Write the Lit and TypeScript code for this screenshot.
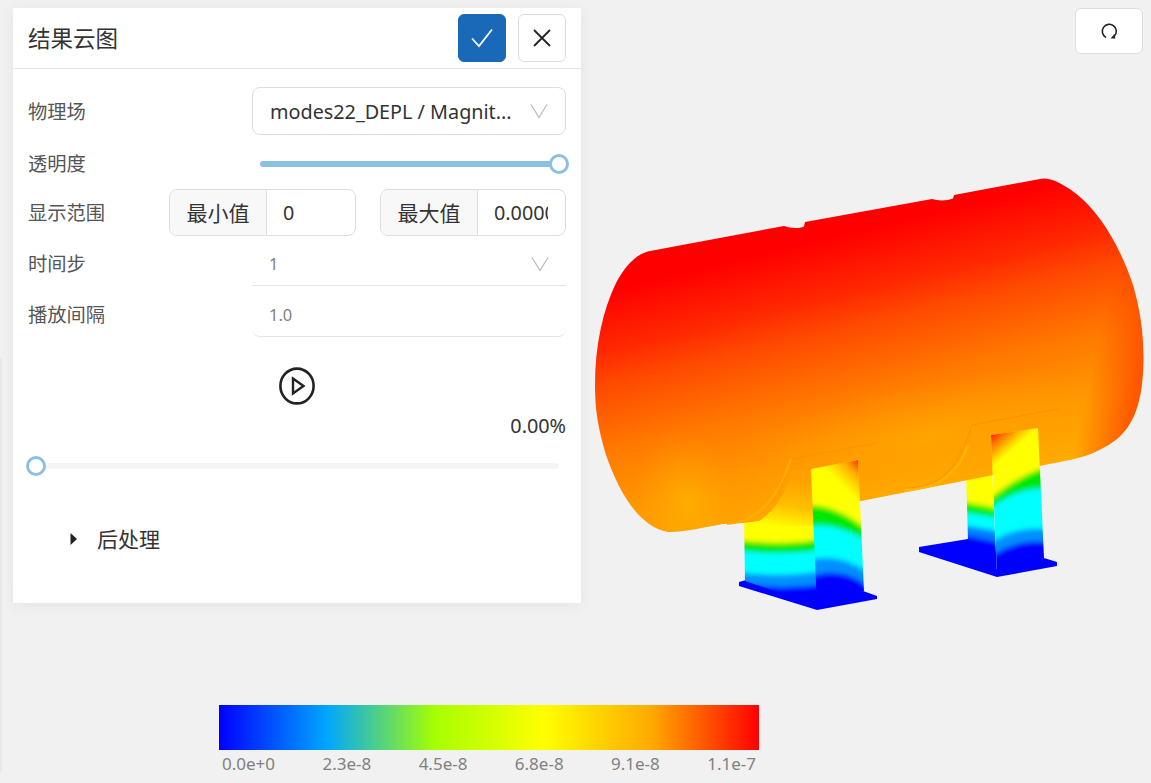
import { LitElement, html, css, svg } from 'lit';
import { customElement } from 'lit/decorators.js';

const chevron = html`<svg class="chev" viewBox="0 0 18 16" width="18" height="16">
  <path d="M1 1.5 L9 14.5 L17 1.5" fill="none" stroke="#bdbdbd" stroke-width="1.3"/>
</svg>`;

// the tank and its two saddles, painted roughly like the solver's contour plot
const tankPath =
  'M650 251 L784 226 C790 228 798 229 804 226.5 L805 222 L932 199 C938 201 947 201 953 198.5 L954 195 L1040 179 ' +
  'C1048 177 1057 181 1068 188 C1094 204 1118 240 1133 285 C1142 315 1146 350 1142 385 C1138 415 1128 435 1105 447 ' +
  'C1090 456 1075 459 1060 462 L815 510 C780 518 750 524 723 524 C705 527 685 532 668 532 C640 527 620 495 606 455 ' +
  'C598 428 595 410 595 385 C595 345 603 310 616 283 C624 268 635 254 650 251 Z';

const faceA1 = 'M744 515 L815 500 L818 606 L745 581 Z';
const faceA2 = 'M811 469 L858 460 L864 591 L817 606 Z';
const faceB1 = 'M966 470 L992 470 L997 576 L968 540 Z';
const faceB2 = 'M991 435 L1038 428 L1044 558 L997 576 Z';

// one colour layer of a saddle face: everything below the curve through three points
const band = (color: string, x0: number, y0: number, x1: number, y1: number, x2: number, y2: number) =>
  svg`<path d="M${x0} ${y0} Q${x1} ${2 * y1 - (y0 + y2) / 2} ${x2} ${y2} L${x2} 640 L${x0} 640 Z" fill=${color}/>`;

const model = svg`
  <defs>
    <linearGradient id="tankFill" gradientUnits="userSpaceOnUse" x1="835" y1="212" x2="905" y2="505">
      <stop offset="0" stop-color="#ff0000"/>
      <stop offset="0.08" stop-color="#ff0000"/>
      <stop offset="0.27" stop-color="#ff2800"/>
      <stop offset="0.376" stop-color="#ff4800"/>
      <stop offset="0.6" stop-color="#ff7a00"/>
      <stop offset="0.8" stop-color="#ff9800"/>
      <stop offset="1" stop-color="#ffae00"/>
    </linearGradient>
    <radialGradient id="endGlow" gradientUnits="userSpaceOnUse" cx="0" cy="0" r="1"
      gradientTransform="translate(688 505) rotate(-10) scale(60 75)">
      <stop offset="0" stop-color="#ffb000" stop-opacity="0.9"/>
      <stop offset="0.6" stop-color="#ffa000" stop-opacity="0.4"/>
      <stop offset="1" stop-color="#ff9000" stop-opacity="0"/>
    </radialGradient>
    <radialGradient id="midGlow" gradientUnits="userSpaceOnUse" cx="0" cy="0" r="1"
      gradientTransform="translate(930 435) rotate(-10) scale(210 55)">
      <stop offset="0" stop-color="#ffaa00" stop-opacity="0.7"/>
      <stop offset="1" stop-color="#ffa000" stop-opacity="0"/>
    </radialGradient>
    <linearGradient id="edgeRed" gradientUnits="userSpaceOnUse" x1="1100" y1="330" x2="1146" y2="340">
      <stop offset="0" stop-color="#ff4000" stop-opacity="0"/>
      <stop offset="1" stop-color="#ff3c00" stop-opacity="0.7"/>
    </linearGradient>
    <linearGradient id="cradle" gradientUnits="userSpaceOnUse" x1="790" y1="478" x2="782" y2="528">
      <stop offset="0" stop-color="#ffa000"/>
      <stop offset="0.55" stop-color="#ffc000"/>
      <stop offset="1" stop-color="#ffff00"/>
    </linearGradient>
    <linearGradient id="legACorner" gradientUnits="userSpaceOnUse" x1="838" y1="482" x2="860" y2="460">
      <stop offset="0" stop-color="#ffa000" stop-opacity="0"/>
      <stop offset="0.55" stop-color="#ff9000" stop-opacity="0.7"/>
      <stop offset="1" stop-color="#ff2000"/>
    </linearGradient>
    <linearGradient id="legBCorner" gradientUnits="userSpaceOnUse" x1="1006" y1="456" x2="990" y2="438">
      <stop offset="0" stop-color="#ff9000" stop-opacity="0"/>
      <stop offset="0.5" stop-color="#ff8000" stop-opacity="0.75"/>
      <stop offset="1" stop-color="#ff3000"/>
    </linearGradient>
    <clipPath id="tankClip"><path d=${tankPath}/></clipPath>
    <clipPath id="clipA1"><path d=${faceA1}/></clipPath>
    <clipPath id="clipA2"><path d=${faceA2}/></clipPath>
    <clipPath id="clipB1"><path d=${faceB1}/></clipPath>
    <clipPath id="clipB2"><path d=${faceB2}/></clipPath>
    <filter id="soft" x="-20%" y="-20%" width="140%" height="140%"><feGaussianBlur stdDeviation="2.6"/></filter>
  </defs>

  <!-- back saddle, the part that shows under the shell -->
  <path d="M919 547 L968 539 L997 570 L1044 558 L1057 562 L1057 566 L997 577 L919 552 Z" fill="#0000ff"/>
  <g clip-path="url(#clipB1)"><g filter="url(#soft)">
    <rect x="950" y="460" width="60" height="130" fill="#ffff00"/>
    ${band('#00ee00', 950, 500, 980, 505, 1010, 511)}
    ${band('#00ffff', 950, 511, 980, 515, 1010, 520)}
    ${band('#0080ff', 950, 524, 980, 528, 1010, 534)}
    ${band('#0000ff', 950, 534, 980, 538, 1010, 546)}
  </g></g>

  <!-- front saddle, left face and foot -->
  <path d="M739 582 L746 580 L817 603 L863 591 L877 596 L877 599 L817 610 L739 586 Z" fill="#0000ff"/>
  <g clip-path="url(#clipA1)"><g filter="url(#soft)">
    <rect x="730" y="490" width="100" height="130" fill="#ffff00"/>
    ${band('#00e800', 730, 539, 780, 543, 830, 538)}
    ${band('#00ffff', 730, 549, 780, 553, 830, 549)}
    ${band('#0090ff', 730, 571, 780, 575, 830, 570)}
    ${band('#0000ff', 730, 582, 780, 587, 830, 583)}
  </g></g>

  <!-- shell -->
  <path d=${tankPath} fill="url(#tankFill)"/>
  <g clip-path="url(#tankClip)">
    <path d=${tankPath} fill="url(#midGlow)"/>
    <path d=${tankPath} fill="url(#endGlow)"/>
    <path d=${tankPath} fill="url(#edgeRed)"/>
    <path d="M791 459 L877 443 M972 425 L1058 409" fill="none" stroke="#ff9000" stroke-width="1.2"/>
    <path d="M905 488 C940 488 958 470 972 425" fill="none" stroke="#ff9400" stroke-width="1.2"/>
    <path d="M905 490 C940 490 960 470 968 445" fill="none" stroke="#ffb800" stroke-width="2.4"/>
  </g>
  <!-- front cradle wraps the shell and shades into the yellow face -->
  <path d="M745 527 C770 520 785 497 792 470 L815 470 L815 526 Z" fill="url(#cradle)"/>
  <path d="M727 524 C755 522 775 505 791 459" fill="none" stroke="#ffb000" stroke-width="1.8"/>

  <!-- saddle faces that stand in front of the shell -->
  <g clip-path="url(#clipA2)"><g filter="url(#soft)">
    <rect x="800" y="450" width="75" height="170" fill="#ffff00"/>
    ${band('#00e800', 800, 506, 832, 510, 870, 532)}
    ${band('#00ffff', 800, 528, 832, 527, 870, 543)}
    ${band('#0090ff', 800, 562, 838, 559, 870, 574)}
    ${band('#0000ff', 800, 580, 840, 573, 870, 588)}
  </g></g>
  <path d=${faceA2} fill="url(#legACorner)"/>
  <g clip-path="url(#clipB2)"><g filter="url(#soft)">
    <rect x="985" y="420" width="70" height="170" fill="#ffff00"/>
    ${band('#00e800', 985, 503, 1017, 480, 1050, 466)}
    ${band('#00ffff', 985, 512, 1017, 493, 1050, 489)}
    ${band('#0090ff', 985, 546, 1017, 531, 1050, 530)}
    ${band('#0000ff', 985, 560, 1017, 544, 1050, 543)}
  </g></g>
  <path d=${faceB2} fill="url(#legBCorner)"/>
`;

@customElement('app-root')
export class AppRoot extends LitElement {
  static styles = css`
    :host {
      display: block;
      position: relative;
      width: 1151px;
      height: 783px;
      overflow: hidden;
      background: #f1f1f1;
      font-family: 'Noto Sans', 'Noto Sans CJK SC', sans-serif;
      color: #333;
    }
    .strip {
      position: absolute;
      left: 0;
      top: 358px;
      width: 2px;
      height: 414px;
      background: #e8e8e8;
    }
    .model {
      position: absolute;
      left: 0;
      top: 0;
    }
    .reset {
      position: absolute;
      left: 1075px;
      top: 8px;
      width: 68px;
      height: 46px;
      box-sizing: border-box;
      display: flex;
      align-items: center;
      justify-content: center;
      background: #fff;
      border: 1px solid #ddd;
      border-radius: 6px;
    }
    .panel {
      position: absolute;
      left: 13px;
      top: 8px;
      width: 568px;
      height: 595px;
      background: #fff;
      box-shadow: 0 2px 14px rgba(0, 0, 0, 0.06);
      display: flex;
      flex-direction: column;
    }
    .head {
      height: 61px;
      box-sizing: border-box;
      flex: none;
      display: flex;
      align-items: center;
      gap: 12px;
      padding: 0 15px;
      border-bottom: 1px solid #e4e4e4;
    }
    .title {
      flex: 1;
      font-size: 22.5px;
      padding-bottom: 2px;
      color: #333;
    }
    .btn {
      width: 48px;
      height: 48px;
      box-sizing: border-box;
      border-radius: 6px;
      display: flex;
      align-items: center;
      justify-content: center;
      background: #fff;
      border: 1px solid #ddd;
    }
    .btn.ok {
      background: #1a69b8;
      border-color: #1a69b8;
    }
    .body {
      padding: 18px 15px 0;
      display: flex;
      flex-direction: column;
    }
    .row {
      display: flex;
      align-items: center;
      font-size: 19.3px;
      color: #555;
    }
    .row .lab {
      width: 224px;
      flex: none;
    }
    .row.opacity {
      height: 24px;
      margin-top: 17px;
    }
    .row.opacity .lab {
      padding-bottom: 3px;
    }
    .row.under {
      margin-top: 2px;
    }
    .row.under .lab {
      padding-top: 2px;
    }
    .row.under + .row.under {
      margin-top: 3px;
    }
    .sel {
      width: 314px;
      height: 48px;
      box-sizing: border-box;
      border: 1px solid #ddd;
      border-radius: 8px;
      padding: 0 17px;
      display: flex;
      align-items: center;
      justify-content: space-between;
      color: #333;
      font-size: 19.8px;
      white-space: nowrap;
    }
    .chev {
      flex: none;
    }
    .slider {
      position: relative;
      margin-left: 8px;
      width: 298px;
      height: 6px;
      background: #8bc0e2;
      border-radius: 3px;
    }
    .knob {
      position: absolute;
      top: -7px;
      width: 20px;
      height: 20px;
      box-sizing: border-box;
      border-radius: 50%;
      background: #fff;
      border: 3px solid #8bc0e2;
    }
    .range {
      display: flex;
      align-items: center;
      margin-top: 13px;
    }
    .range .lab {
      width: 141px;
      flex: none;
      padding-bottom: 1px;
    }
    .group {
      height: 47px;
      box-sizing: border-box;
      border: 1px solid #ddd;
      border-radius: 8px;
      display: flex;
      overflow: hidden;
      color: #333;
    }
    .group .addon {
      width: 97px;
      flex: none;
      display: flex;
      align-items: center;
      justify-content: center;
      background: #f8f8f8;
      border-right: 1px solid #ddd;
      box-sizing: border-box;
      font-size: 21px;
      padding-bottom: 2px;
    }
    .group .val {
      margin-left: 16px;
      width: 54px;
      display: flex;
      align-items: center;
      font-size: 19.8px;
      overflow: hidden;
      white-space: nowrap;
    }
    .group.min {
      width: 187px;
      margin-right: 24px;
    }
    .group.max {
      width: 186px;
    }
    .plain {
      width: 314px;
      height: 48px;
      box-sizing: border-box;
      padding: 4px 17px 0;
      display: flex;
      align-items: center;
      justify-content: space-between;
      color: #808080;
      font-size: 16.5px;
      border-bottom: 1px solid #e4e4e4;
    }
    .plain.round {
      border-radius: 0 0 8px 8px;
    }
    .play {
      display: flex;
      justify-content: center;
      margin-top: 30px;
    }
    .pct {
      text-align: right;
      font-size: 19.8px;
      color: #333;
      margin-top: 8px;
      line-height: 26px;
    }
    .track {
      position: relative;
      margin: 24px 7px 0 8px;
      height: 6px;
      background: #f5f5f5;
      border-radius: 3px;
    }
    .post {
      display: flex;
      align-items: center;
      margin: 55px 0 0 42px;
      font-size: 21px;
      color: #333;
      line-height: 30px;
    }
    .post svg {
      margin-right: 19px;
    }
    .scale {
      position: absolute;
      left: 219px;
      top: 705px;
      width: 540px;
    }
    .bar {
      height: 45px;
      background: linear-gradient(to right, #0000ff 0%, #00a6ff 20%, #a6ff00 40%, #ffff00 60%, #ffaa00 80%, #ff0000 100%);
    }
    .ticks {
      display: flex;
      justify-content: space-between;
      padding: 0 3px;
      margin-top: 3px;
      font-size: 17px;
      line-height: 22px;
      color: #808080;
    }
  `;

  render() {
    return html`
      <div class="strip"></div>
      <svg class="model" width="1151" height="783" viewBox="0 0 1151 783">${model}</svg>

      <div class="reset">
        <svg width="20" height="20" viewBox="0 0 20 20">
          <path d="M7 16.5 A7 7 0 1 1 15 15.5" fill="none" stroke="#222" stroke-width="1.6"/>
          <path d="M11.6 17.4 L16.4 17.6 L15.6 12.8 Z" fill="#222"/>
        </svg>
      </div>

      <div class="panel">
        <div class="head">
          <div class="title">结果云图</div>
          <div class="btn ok">
            <svg width="24" height="22" viewBox="0 0 24 22">
              <path d="M2 11.5 L9 19 L22 2.5" fill="none" stroke="#fff" stroke-width="1.8"/>
            </svg>
          </div>
          <div class="btn">
            <svg width="18" height="18" viewBox="0 0 18 18">
              <path d="M1 1 L17 17 M17 1 L1 17" fill="none" stroke="#222" stroke-width="1.8"/>
            </svg>
          </div>
        </div>
        <div class="body">
          <div class="row">
            <div class="lab">物理场</div>
            <div class="sel"><span>modes22_DEPL / Magnit...</span>${chevron}</div>
          </div>
          <div class="row opacity">
            <div class="lab">透明度</div>
            <div class="slider"><div class="knob" style="left:289px"></div></div>
          </div>
          <div class="row range">
            <div class="lab">显示范围</div>
            <div class="group min"><div class="addon">最小值</div><div class="val">0</div></div>
            <div class="group max"><div class="addon">最大值</div><div class="val">0.0000</div></div>
          </div>
          <div class="row under">
            <div class="lab">时间步</div>
            <div class="plain"><span>1</span>${chevron}</div>
          </div>
          <div class="row under">
            <div class="lab">播放间隔</div>
            <div class="plain round"><span>1.0</span></div>
          </div>
          <div class="play">
            <svg width="36" height="38" viewBox="0 0 36 38">
              <ellipse cx="18" cy="19" rx="16.6" ry="17.4" fill="none" stroke="#222" stroke-width="2.6"/>
              <path d="M14 11.5 L24.5 19 L14 26.5 Z" fill="none" stroke="#222" stroke-width="2.4"/>
            </svg>
          </div>
          <div class="pct">0.00%</div>
          <div class="track"><div class="knob" style="left:-10px"></div></div>
          <div class="post">
            <svg width="8" height="12" viewBox="0 0 8 12"><path d="M0.5 0 L7 6 L0.5 12 Z" fill="#222"/></svg>
            <span>后处理</span>
          </div>
        </div>
      </div>

      <div class="scale">
        <div class="bar"></div>
        <div class="ticks">
          <span>0.0e+0</span><span>2.3e-8</span><span>4.5e-8</span><span>6.8e-8</span><span>9.1e-8</span><span>1.1e-7</span>
        </div>
      </div>
    `;
  }
}
